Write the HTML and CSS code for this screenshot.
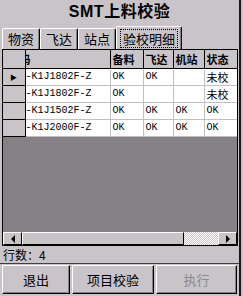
FILE: index.html
```html
<!DOCTYPE html>
<html lang="zh">

<head>
    <meta charset="UTF-8">
    <title>SMT上料校验</title>
    <link rel="stylesheet" href="styles.css">
</head>

<body>
    <div class="title">SMT上料校验</div>

    <div class="tabs">
        <div class="tab">物资</div>
        <div class="tab">飞达</div>
        <div class="tab">站点</div>
        <div class="tab active"><span class="focus">验校明细</span></div>
    </div>

    <div class="grid">
        <table>
            <colgroup>
                <col class="c-rh">
                <col class="c-code">
                <col class="c-a">
                <col class="c-b">
                <col class="c-c">
                <col class="c-d">
            </colgroup>
            <tr class="head">
                <th></th>
                <th class="clip"><span>码</span></th>
                <th>备料</th>
                <th>飞达</th>
                <th>机站</th>
                <th>状态</th>
            </tr>
            <tr>
                <th class="cur">&#9654;</th>
                <td class="code">-K1J1802F-Z</td>
                <td>OK</td>
                <td>OK</td>
                <td></td>
                <td class="cn">未校</td>
            </tr>
            <tr>
                <th></th>
                <td class="code">-K1J1802F-Z</td>
                <td>OK</td>
                <td></td>
                <td></td>
                <td class="cn">未校</td>
            </tr>
            <tr>
                <th></th>
                <td class="code">-K1J1502F-Z</td>
                <td>OK</td>
                <td>OK</td>
                <td>OK</td>
                <td>OK</td>
            </tr>
            <tr>
                <th></th>
                <td class="code">-K1J2000F-Z</td>
                <td>OK</td>
                <td>OK</td>
                <td>OK</td>
                <td>OK</td>
            </tr>
        </table>
        <div class="empty"></div>
        <div class="hscroll">
            <div class="sbtn"><span class="arr-l"></span></div>
            <div class="thumb"></div>
            <div class="track"></div>
            <div class="sbtn"><span class="arr-r"></span></div>
        </div>
    </div>

    <div class="status">行数：4</div>

    <div class="buttons">
        <div class="btn b-exit">退出</div>
        <div class="btn b-check">项目校验</div>
        <div class="btn b-run disabled">执行</div>
    </div>
</body>

</html>
```

FILE: styles.css
```css
* {
    box-sizing: border-box;
}

html {
    background-color: #c8c4c8;
}

body {
    margin: 0;
    width: 241px;
    height: 296px;
    background-color: #c8c4c8;
    border-right: 2px solid #181818;
    font-family: "Noto Sans CJK SC", sans-serif;
    color: #000;
    overflow: hidden;
}

.title {
    height: 25px;
    line-height: 24px;
    text-align: center;
    font-family: "Liberation Sans", "Noto Sans CJK SC", sans-serif;
    font-weight: bold;
    font-size: 16px;
    letter-spacing: 0.5px;
}

/* tabs */
.tabs {
    display: flex;
    align-items: flex-end;
    height: 24px;
    padding-left: 2px;
}

.tab {
    width: 38px;
    height: 21px;
    line-height: 20px;
    font-size: 13px;
    text-align: center;
    border-top: 1px solid #fff;
    border-left: 1px solid #fff;
    border-right: 1px solid #000;
    border-radius: 2px 2px 0 0;
    box-shadow: inset -1px 0 #848284;
}

.tab.active {
    width: 66px;
    height: 23px;
    padding: 2px 3px 0 3px;
    line-height: 16px;
}

.focus {
    display: block;
    border: 1px dotted #000;
    height: 19px;
    line-height: 17px;
}

/* grid */
.grid {
    margin-left: 2px;
    width: 236px;
    height: 197px;
    border: 1px solid #000;
    display: flex;
    flex-direction: column;
    background-color: #848284;
}

table {
    border-collapse: collapse;
    table-layout: fixed;
    width: 234px;
    background-color: #fff;
}

.c-rh { width: 22px; }
.c-code { width: 85px; }
.c-a { width: 33px; }
.c-b { width: 30px; }
.c-c { width: 31px; }
.c-d { width: 33px; }

tr {
    height: 17px;
}

tr.head {
    height: 18px;
}

th {
    background-color: #c8c4c8;
    border: 1px solid #000;
    border-top: none;
    font-size: 11px;
    font-weight: bold;
    text-align: left;
    padding: 0 0 0 2px;
    white-space: nowrap;
    overflow: hidden;
}

th:first-child {
    border-left: none;
}

th:last-child {
    border-right: none;
}

th.clip span {
    display: inline-block;
    margin-left: -8px;
}

th.cur {
    font-size: 7px;
    font-weight: normal;
    padding-left: 7px;
}

td {
    border: 1px solid #c0c0c0;
    border-top: none;
    font-family: "Liberation Mono", monospace;
    font-size: 10px;
    padding: 0 0 0 2px;
    white-space: nowrap;
    overflow: hidden;
}

td:last-child {
    border-right: none;
}

td.code {
    padding-left: 0;
    border-left: 1px solid #000;
}

td.cn {
    font-family: "Noto Sans CJK SC", sans-serif;
    font-size: 11px;
}

.empty {
    flex: 1;
}

/* scrollbar */
.hscroll {
    display: flex;
    height: 13px;
    background-color: #c8c4c8;
}

.sbtn {
    width: 19px;
    display: flex;
    align-items: center;
    justify-content: center;
    border-top: 1px solid #fff;
    border-left: 1px solid #fff;
    border-right: 1px solid #000;
    border-bottom: 1px solid #000;
}

.arr-l {
    border-top: 4px solid transparent;
    border-bottom: 4px solid transparent;
    border-right: 4px solid #000;
}

.arr-r {
    border-top: 4px solid transparent;
    border-bottom: 4px solid transparent;
    border-left: 4px solid #000;
}

.thumb {
    width: 162px;
    border-top: 1px solid #fff;
    border-left: 1px solid #fff;
    border-right: 1px solid #000;
    border-bottom: 1px solid #000;
}

.track {
    flex: 1;
    background-color: #fff;
    background-image: conic-gradient(#c8c4c8 25%, #fff 0 50%, #c8c4c8 0 75%, #fff 0);
    background-size: 2px 2px;
}

.status {
    height: 17px;
    line-height: 17px;
    padding-left: 3px;
    font-size: 12px;
}

/* buttons */
.buttons {
    display: flex;
    gap: 2px;
    height: 34px;
    padding: 1px 0 3px 2px;
    border-top: 1px solid #404040;
}

.btn {
    height: 29px;
    line-height: 27px;
    text-align: center;
    font-size: 13px;
    border-top: 1px solid #fff;
    border-left: 1px solid #fff;
    border-right: 1px solid #000;
    border-bottom: 1px solid #000;
    box-shadow: inset -1px -1px #848284;
}

.b-exit { width: 68px; }
.b-check { width: 82px; }
.b-run { width: 81px; }

.disabled {
    color: #8c898c;
}
```
